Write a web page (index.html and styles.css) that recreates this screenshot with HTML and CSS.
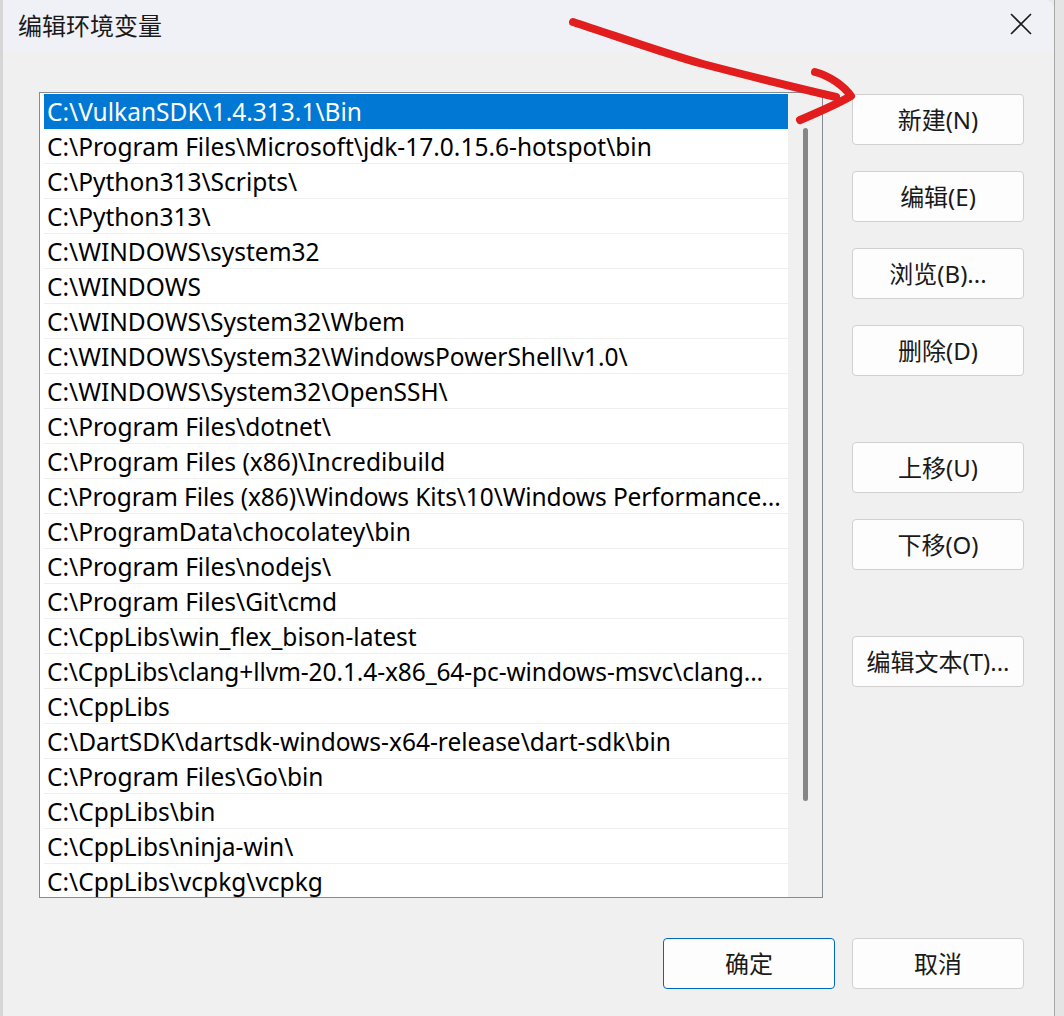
FILE: index.html
```html
<!DOCTYPE html>
<html lang="zh-CN">
<head>
<meta charset="utf-8">
<title>编辑环境变量</title>
<link rel="stylesheet" href="styles.css">
</head>
<body>
<div class="desktop">
  <div class="bg-left"></div>
  <div class="dialog">
    <div class="titlebar">
      <span class="title">编辑环境变量</span>
      <span class="close" aria-label="关闭">
        <svg width="22" height="22" viewBox="0 0 22 22"><path d="M1 1 L21 21 M21 1 L1 21" stroke="#1a1a1a" stroke-width="1.6" fill="none"/></svg>
      </span>
    </div>
    <div class="content">
      <div class="listbox">
        <div class="rows">
          <div class="row selected">C:\VulkanSDK\1.4.313.1\Bin</div>
          <div class="row">C:\Program Files\Microsoft\jdk-17.0.15.6-hotspot\bin</div>
          <div class="row">C:\Python313\Scripts\</div>
          <div class="row">C:\Python313\</div>
          <div class="row">C:\WINDOWS\system32</div>
          <div class="row">C:\WINDOWS</div>
          <div class="row">C:\WINDOWS\System32\Wbem</div>
          <div class="row">C:\WINDOWS\System32\WindowsPowerShell\v1.0\</div>
          <div class="row">C:\WINDOWS\System32\OpenSSH\</div>
          <div class="row">C:\Program Files\dotnet\</div>
          <div class="row">C:\Program Files (x86)\Incredibuild</div>
          <div class="row tight">C:\Program Files (x86)\Windows Kits\10\Windows Performance...</div>
          <div class="row">C:\ProgramData\chocolatey\bin</div>
          <div class="row">C:\Program Files\nodejs\</div>
          <div class="row">C:\Program Files\Git\cmd</div>
          <div class="row">C:\CppLibs\win_flex_bison-latest</div>
          <div class="row tight">C:\CppLibs\clang+llvm-20.1.4-x86_64-pc-windows-msvc\clang...</div>
          <div class="row">C:\CppLibs</div>
          <div class="row">C:\DartSDK\dartsdk-windows-x64-release\dart-sdk\bin</div>
          <div class="row">C:\Program Files\Go\bin</div>
          <div class="row">C:\CppLibs\bin</div>
          <div class="row">C:\CppLibs\ninja-win\</div>
          <div class="row">C:\CppLibs\vcpkg\vcpkg</div>
        </div>
        <div class="scrollbar"><div class="thumb"></div></div>
      </div>
      <div class="side">
        <div class="group">
          <button class="btn">新建(N)</button>
          <button class="btn">编辑(E)</button>
          <button class="btn">浏览(B)...</button>
          <button class="btn">删除(D)</button>
        </div>
        <div class="group">
          <button class="btn">上移(U)</button>
          <button class="btn">下移(O)</button>
        </div>
        <div class="group">
          <button class="btn">编辑文本(T)...</button>
        </div>
      </div>
    </div>
    <div class="footer">
      <button class="btn default">确定</button>
      <button class="btn">取消</button>
    </div>
    <svg class="arrow" width="320" height="140" viewBox="0 0 320 140">
      <path d="M7 12 C 50 26, 100 44, 137 54 C 175 64, 215 74, 270 87" stroke="#e21d1d" stroke-width="8" fill="none" stroke-linecap="round"/>
      <path d="M249 62 C 264 66, 278 76, 285 86 C 268 96, 252 102, 234 110" stroke="#e21d1d" stroke-width="8" fill="none" stroke-linecap="round" stroke-linejoin="round"/>
    </svg>
  </div>
  <div class="bg-right"></div>
</div>
</body>
</html>
```

FILE: styles.css
```css
* { box-sizing: border-box; }
html, body { margin: 0; padding: 0; }
body {
  width: 1064px;
  height: 1016px;
  overflow: hidden;
  background: #e9e9e9;
  font-family: "Noto Sans", "Noto Sans CJK SC", sans-serif;
  color: #1a1a1a;
}
.desktop {
  display: flex;
  height: 1016px;
}
.bg-left {
  width: 3px;
  background: #d6d6d6;
  flex: none;
}
.bg-right {
  flex: 1;
  background: #e4e4e4;
  border-left: 1px solid #a8a8a8;
}
.dialog {
  position: relative;
  width: 1051px;
  flex: none;
  height: 1030px;
  background: #f0f0f0;
  border-top-right-radius: 9px;
  border-bottom-right-radius: 9px;
  overflow: hidden;
  display: flex;
  flex-direction: column;
}
.titlebar {
  height: 52px;
  background: #eff1f6;
  display: flex;
  align-items: center;
  justify-content: space-between;
  padding: 0 22px 4px 15px;
  flex: none;
}
.title {
  font-family: "Noto Sans CJK SC", sans-serif;
  font-size: 24px;
  color: #1a1a1a;
}
.close {
  display: flex;
  width: 22px;
  height: 22px;
}
.content {
  display: flex;
  padding: 40px 0 0 36px;
  gap: 29px;
}
.listbox {
  width: 784px;
  height: 806px;
  border: 1px solid #868a91;
  background: #ffffff;
  display: flex;
  flex: none;
}
.rows {
  flex: 1;
  padding: 1px 0 0 4px;
  overflow: hidden;
  min-width: 0;
}
.row {
  height: 35px;
  line-height: 36px;
  border-bottom: 1px solid #efefef;
  padding: 0 0 0 3px;
  font-size: 24.5px;
  white-space: nowrap;
  color: #000;
}
.row.tight {
  letter-spacing: -0.1px;
}
.row.selected {
  background: #0078d4;
  color: #fff;
  border-bottom-color: #0078d4;
}
.scrollbar {
  width: 34px;
  background: #f0f0f0;
  flex: none;
  padding-top: 35px;
  display: flex;
  justify-content: center;
}
.thumb {
  width: 5px;
  height: 673px;
  background: #868686;
  border-radius: 3px;
}
.side {
  display: flex;
  flex-direction: column;
  gap: 66px;
  padding-top: 2px;
}
.group {
  display: flex;
  flex-direction: column;
  gap: 26px;
}
.btn {
  width: 172px;
  height: 51px;
  background: #fdfdfd;
  border: 1px solid #d0d0d0;
  border-radius: 4px;
  font-family: "Noto Sans", "Noto Sans CJK SC", sans-serif;
  font-size: 24px;
  color: #1a1a1a;
  padding: 0 0 2px;
}
.btn.default {
  border-color: #0067c0;
}
.footer {
  display: flex;
  justify-content: flex-end;
  gap: 17px;
  padding: 40px 30px 0 0;
}
.arrow {
  position: absolute;
  left: 563px;
  top: 10px;
  pointer-events: none;
}
```
